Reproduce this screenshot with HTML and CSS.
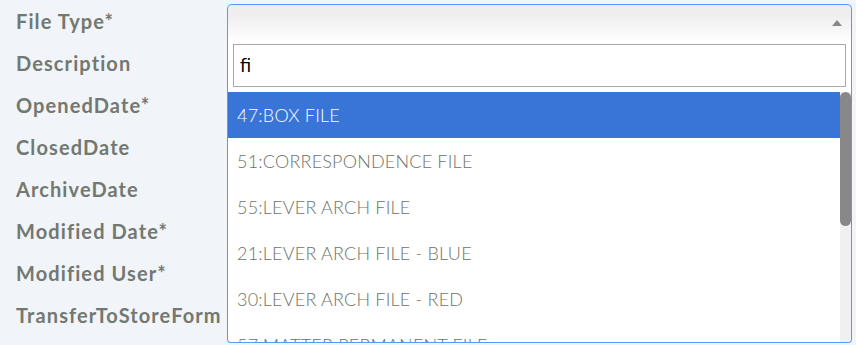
FILE: index.html
```html
<!DOCTYPE html>
<html lang="en">
<head>
  <meta charset="UTF-8">
  <title>File Details</title>
  <link rel="stylesheet" href="styles.css">
</head>
<body>
  <div class="form">
    <!-- label column -->
    <div class="labels">
      <label>File Type*</label>
      <label>Description</label>
      <label>OpenedDate*</label>
      <label>ClosedDate</label>
      <label>ArchiveDate</label>
      <label>Modified Date*</label>
      <label>Modified User*</label>
      <label>TransferToStoreForm</label>
    </div>

    <!-- field column -->
    <div class="fields">
      <div class="chosen">
        <div class="chosen-single">
          <span class="arrow"></span>
        </div>
        <div class="chosen-drop">
          <div class="search"><input type="text" value="fi"></div>
          <div class="results-wrap">
            <ul class="results">
              <li class="highlighted">47:BOX FILE</li>
              <li>51:CORRESPONDENCE FILE</li>
              <li>55:LEVER ARCH FILE</li>
              <li>21:LEVER ARCH FILE - BLUE</li>
              <li>30:LEVER ARCH FILE - RED</li>
              <li>57:MATTER PERMANENT FILE</li>
            </ul>
            <div class="scrollbar"><div class="thumb"></div></div>
          </div>
        </div>
      </div>
      <div class="field-input"></div>
    </div>
  </div>
</body>
</html>
```

FILE: styles.css
```css
/* base */
* {
  box-sizing: border-box;
}
html, body {
  height: 100%;
}
body {
  margin: 0;
  padding: 0;
  background: #f1f4f9;
  font-family: 'Lato', 'Liberation Sans', sans-serif;
  overflow: hidden;
}

.form {
  display: flex;
  height: 100%;
}

/* labels */
.labels {
  width: 227px;
  padding-left: 16px;
  display: flex;
  flex-direction: column;
}
.labels label {
  height: 42px;
  line-height: 42px;
  font-size: 20px;
  font-weight: bold;
  letter-spacing: 1.1px;
  color: #737870;
  white-space: nowrap;
}

/* fields */
.fields {
  flex: 1;
  padding-top: 4px;
  padding-right: 4px;
}
.field-input {
  height: 36px;
  margin-top: 4px;
  border-top: 1px solid #dde1e6;
  border-bottom: 1px solid #dde1e6;
}

/* chosen style select, opened */
.chosen {
  position: relative;
}
.chosen-single {
  height: 38px;
  border: 1px solid #5897fb;
  border-bottom: none;
  border-radius: 5px 5px 0 0;
  background: linear-gradient(#eeeeee 25%, #ffffff 100%);
  display: flex;
  align-items: center;
  justify-content: flex-end;
  padding-right: 9px;
}
.arrow {
  width: 0;
  height: 0;
  border-left: 5px solid transparent;
  border-right: 5px solid transparent;
  border-bottom: 6px solid #888;
  margin-top: -2px;
}
.chosen-drop {
  position: absolute;
  top: 38px;
  left: 0;
  right: 0;
  background: #fff;
  border: 1px solid #5897fb;
  border-top: none;
  border-radius: 0 0 4px 4px;
  z-index: 10;
}
.search {
  padding: 2px 5px 5px;
}
.search input {
  display: block;
  width: 100%;
  height: 43px;
  border: 1px solid #aaa;
  padding: 0 6px;
  font-family: 'DejaVu Sans', sans-serif;
  font-size: 18px;
  color: #000;
  outline: none;
}
.results-wrap {
  display: flex;
  height: 250px;
}
.results {
  flex: 1;
  list-style: none;
  margin: 0;
  padding: 0;
  overflow: hidden;
}
.results li {
  height: 46px;
  line-height: 46px;
  padding-left: 9px;
  font-size: 18px;
  font-weight: 300;
  letter-spacing: 0.2px;
  color: #6f7368;
  white-space: nowrap;
}
.results li.highlighted {
  background: #3875d7;
  color: #fff;
}
.scrollbar {
  width: 11px;
  background: #f0f0f0;
  border-radius: 0 0 4px 0;
}
.thumb {
  height: 134px;
  background: #888;
  border-radius: 6px;
}
```
